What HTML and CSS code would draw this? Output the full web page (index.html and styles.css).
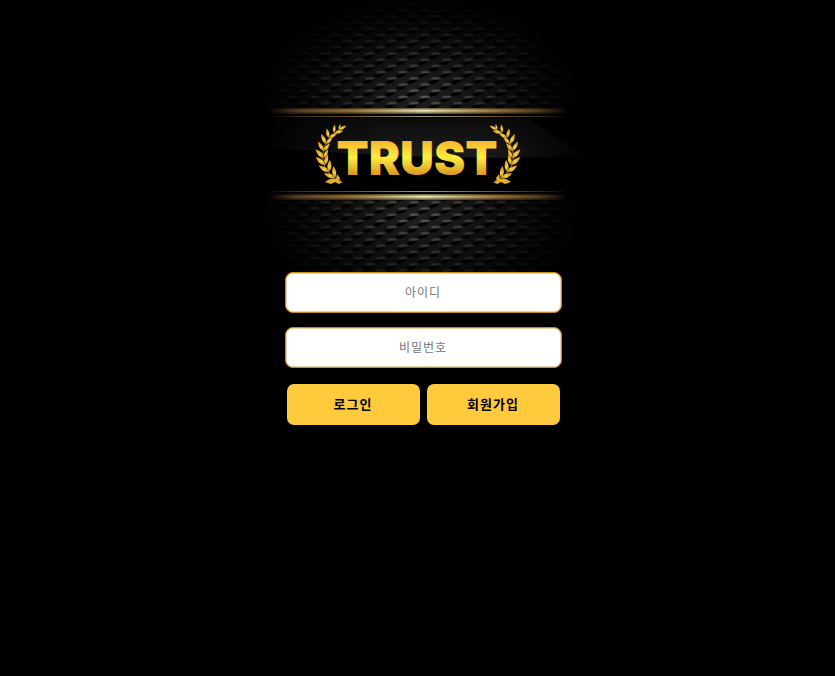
FILE: index.html
```html
<!DOCTYPE html>
<html lang="ko">
<head>
<meta charset="utf-8">
<meta name="viewport" content="width=device-width, initial-scale=1">
<title>TRUST</title>
<link rel="stylesheet" href="styles.css">
</head>
<body>
<main class="page">
  <svg class="banner" viewBox="0 0 340 310" role="img" aria-label="TRUST">
    <defs>
      <linearGradient id="gold" gradientUnits="userSpaceOnUse" x1="0" y1="-10" x2="0" y2="0">
        <stop offset="0" stop-color="#dc9d2a"/><stop offset=".5" stop-color="#f7cf40"/><stop offset="1" stop-color="#b0761c"/>
      </linearGradient>
      <linearGradient id="letters" gradientUnits="userSpaceOnUse" x1="0" y1="141" x2="0" y2="175">
        <stop offset="0" stop-color="#f8b62f"/><stop offset=".48" stop-color="#ffee3f"/><stop offset="1" stop-color="#d9951f"/>
      </linearGradient>
      <linearGradient id="bar">
        <stop offset="0" stop-color="#60482c" stop-opacity="0"/><stop offset=".1" stop-color="#604525"/><stop offset=".28" stop-color="#a27c42"/><stop offset=".52" stop-color="#f8f3b8"/><stop offset=".75" stop-color="#ad8546"/><stop offset=".9" stop-color="#594220"/><stop offset="1" stop-color="#60482c" stop-opacity="0"/>
      </linearGradient>
      <linearGradient id="barShade" x1="0" y1="0" x2="0" y2="1">
        <stop offset="0" stop-color="#000" stop-opacity=".65"/><stop offset=".45" stop-color="#000" stop-opacity="0"/><stop offset="1" stop-color="#000" stop-opacity=".7"/>
      </linearGradient>
      <linearGradient id="sheen" x1="0" y1="0" x2="0" y2="1">
        <stop offset="0" stop-color="#0c0c0c"/><stop offset="1" stop-color="#1c1c1c"/>
      </linearGradient>
      <linearGradient id="sides">
        <stop offset=".05" stop-color="#fff" stop-opacity="0"/><stop offset=".4" stop-color="#fff"/><stop offset=".7" stop-color="#fff"/><stop offset=".9" stop-color="#fff" stop-opacity=".3"/><stop offset="1" stop-color="#fff" stop-opacity="0"/>
      </linearGradient>
      <radialGradient id="glowTop" gradientUnits="userSpaceOnUse" cx="0" cy="0" r="1" gradientTransform="translate(172 94) scale(160 98)">
        <stop offset="0" stop-color="#fff" stop-opacity=".75"/><stop offset=".4" stop-color="#fff" stop-opacity=".38"/><stop offset=".75" stop-color="#fff" stop-opacity=".12"/><stop offset="1" stop-color="#fff" stop-opacity="0"/>
      </radialGradient>
      <radialGradient id="glowBottom" gradientUnits="userSpaceOnUse" cx="0" cy="0" r="1" gradientTransform="translate(172 216) scale(160 100)">
        <stop offset="0" stop-color="#fff" stop-opacity=".75"/><stop offset=".4" stop-color="#fff" stop-opacity=".38"/><stop offset=".75" stop-color="#fff" stop-opacity=".12"/><stop offset="1" stop-color="#fff" stop-opacity="0"/>
      </radialGradient>
      <mask id="fadeTop"><rect width="340" height="108" fill="url(#glowTop)"/></mask>
      <mask id="fadeBottom"><rect y="200" width="340" height="110" fill="url(#glowBottom)"/></mask>
      <mask id="fadeSides"><rect y="100" width="340" height="100" fill="url(#sides)"/></mask>
      <filter id="soft"><feGaussianBlur stdDeviation="1.200 .7"/></filter>
      <pattern id="weave" width="22" height="12.400" patternUnits="userSpaceOnUse" patternTransform="translate(8 .6)">
        <rect width="22" height="13" fill="#2c2c2c"/>
        <path id="groove" d="M-3 8.200 4 6.200 9 1.500 15 0 20-4.700" fill="none" stroke="#000" stroke-width="3"/>
        <use href="#groove" y="12.400"/>
        <use href="#groove" x="11" y="6.200"/>
        <use href="#groove" x="11" y="18.600"/>
        <use href="#groove" x="-11" y="6.200"/>
        <use href="#groove" x="22"/>
        <use href="#groove" x="22" y="12.400"/>
        <path d="M0 3.500 8 3M11 9.700 19 9.200" stroke="#787878" stroke-width="2.400"/>
      </pattern>
      <path id="leaf" d="M0 0C-3-2-4-7-2-12C1-8 2-4 0 0Z" fill="url(#gold)"/>
    </defs>
    <rect width="340" height="108" fill="url(#weave)" filter="url(#soft)" mask="url(#fadeTop)"/>
    <rect y="200" width="340" height="110" fill="url(#weave)" filter="url(#soft)" mask="url(#fadeBottom)"/>
    <path d="M0 118H280Q320 145 340 156Q170 162 0 146Z" fill="url(#sheen)" mask="url(#fadeSides)"/>
    <g>
      <rect x="20" y="108" width="300" height="6" fill="url(#bar)"/>
      <rect x="20" y="108" width="300" height="6" fill="url(#barShade)"/>
      <rect x="20" y="116" width="300" height="1" fill="url(#bar)" opacity=".65"/>
      <rect x="20" y="191" width="300" height="1" fill="url(#bar)" opacity=".65"/>
      <rect x="20" y="194" width="300" height="6" fill="url(#bar)"/>
      <rect x="20" y="194" width="300" height="6" fill="url(#barShade)"/>
    </g>
    <g id="laurel">
      <path d="M93 181C70 172 66 144 96 127" fill="none" stroke="#b78322"/>
      <use href="#leaf" transform="translate(91 130) rotate(70) scale(.7)"/>
      <use href="#leaf" transform="translate(91 130) rotate(22) scale(.5)"/>
      <use href="#leaf" transform="translate(86 133) rotate(14) scale(.7)"/>
      <use href="#leaf" transform="translate(86 133) rotate(86) scale(.8)"/>
      <use href="#leaf" transform="translate(81 138) rotate(-4) scale(.8)"/>
      <use href="#leaf" transform="translate(81 138) rotate(68) scale(.8)"/>
      <use href="#leaf" transform="translate(78 144) rotate(-16) scale(.9)"/>
      <use href="#leaf" transform="translate(78 144) rotate(54) scale(.8)"/>
      <use href="#leaf" transform="translate(76 151) rotate(-24) scale(.9)"/>
      <use href="#leaf" transform="translate(76 151) rotate(46) scale(.8)"/>
      <use href="#leaf" transform="translate(76 158) rotate(-34)"/>
      <use href="#leaf" transform="translate(76 158) rotate(34) scale(.8)"/>
      <use href="#leaf" transform="translate(77 165) rotate(-40)"/>
      <use href="#leaf" transform="translate(77 165) rotate(24) scale(.9)"/>
      <use href="#leaf" transform="translate(81 172) rotate(-48)"/>
      <use href="#leaf" transform="translate(81 172) rotate(14)"/>
      <use href="#leaf" transform="translate(87 178) rotate(-58)"/>
      <use href="#leaf" transform="translate(87 178) rotate(2)"/>
      <path d="M77 182Q83 177 88 179L89 174 92 178 91 181 95 182 91 184 87 182 83 184Z" fill="#e5ad2f"/>
    </g>
    <use href="#laurel" transform="translate(340 0) scale(-1 1)"/>
    <text class="wordmark" x="169" y="175" text-anchor="middle">TRUST</text>
  </svg>
  <form class="login">
    <input class="field" type="text" aria-label="아이디" placeholder="아이디">
    <input class="field" type="password" aria-label="비밀번호" placeholder="비밀번호">
    <div class="actions">
      <button class="button" type="submit">로그인</button>
      <button class="button" type="button">회원가입</button>
    </div>
  </form>
</main>
</body>
</html>
```
FILE: styles.css
```css
* { box-sizing: border-box; }
body {
  margin: 0;
  background: #000;
  font-family: "Noto Sans", "Noto Sans CJK KR", sans-serif;
}
.page {
  min-height: 100vh;
  display: flex;
  flex-direction: column;
  align-items: center;
}
.banner {
  display: block;
  width: 340px;
  max-width: 100%;
  margin-bottom: -38px;
}
.wordmark {
  font-family: Inter, sans-serif;
  font-size: 47px;
  font-weight: 900;
  fill: url(#letters);
}
.login {
  position: relative;
  display: flex;
  flex-direction: column;
  gap: 14px;
  width: 277px;
  max-width: 100%;
  margin-left: 11px;
}
.field {
  width: 100%;
  height: 41px;
  padding: 0 12px 2px;
  border: 1px solid #c58c10;
  border-radius: 8px;
  box-shadow: inset 0 0 0 1px rgba(197, 140, 16, .35);
  background: #fff;
  color: #222;
  font: 12px "Noto Sans CJK KR", sans-serif;
  letter-spacing: 1px;
  text-align: center;
}
.field::placeholder { color: #757575; opacity: 1; }
.actions {
  display: flex;
  gap: 7px;
  padding: 2px 2px 0;
}
.button {
  flex: 1;
  height: 41px;
  padding: 0 0 2px;
  border: 0;
  border-radius: 7px;
  background: #ffca3c;
  color: #000;
  font: 700 13px "Noto Sans CJK KR", sans-serif;
  letter-spacing: 1px;
}
```
